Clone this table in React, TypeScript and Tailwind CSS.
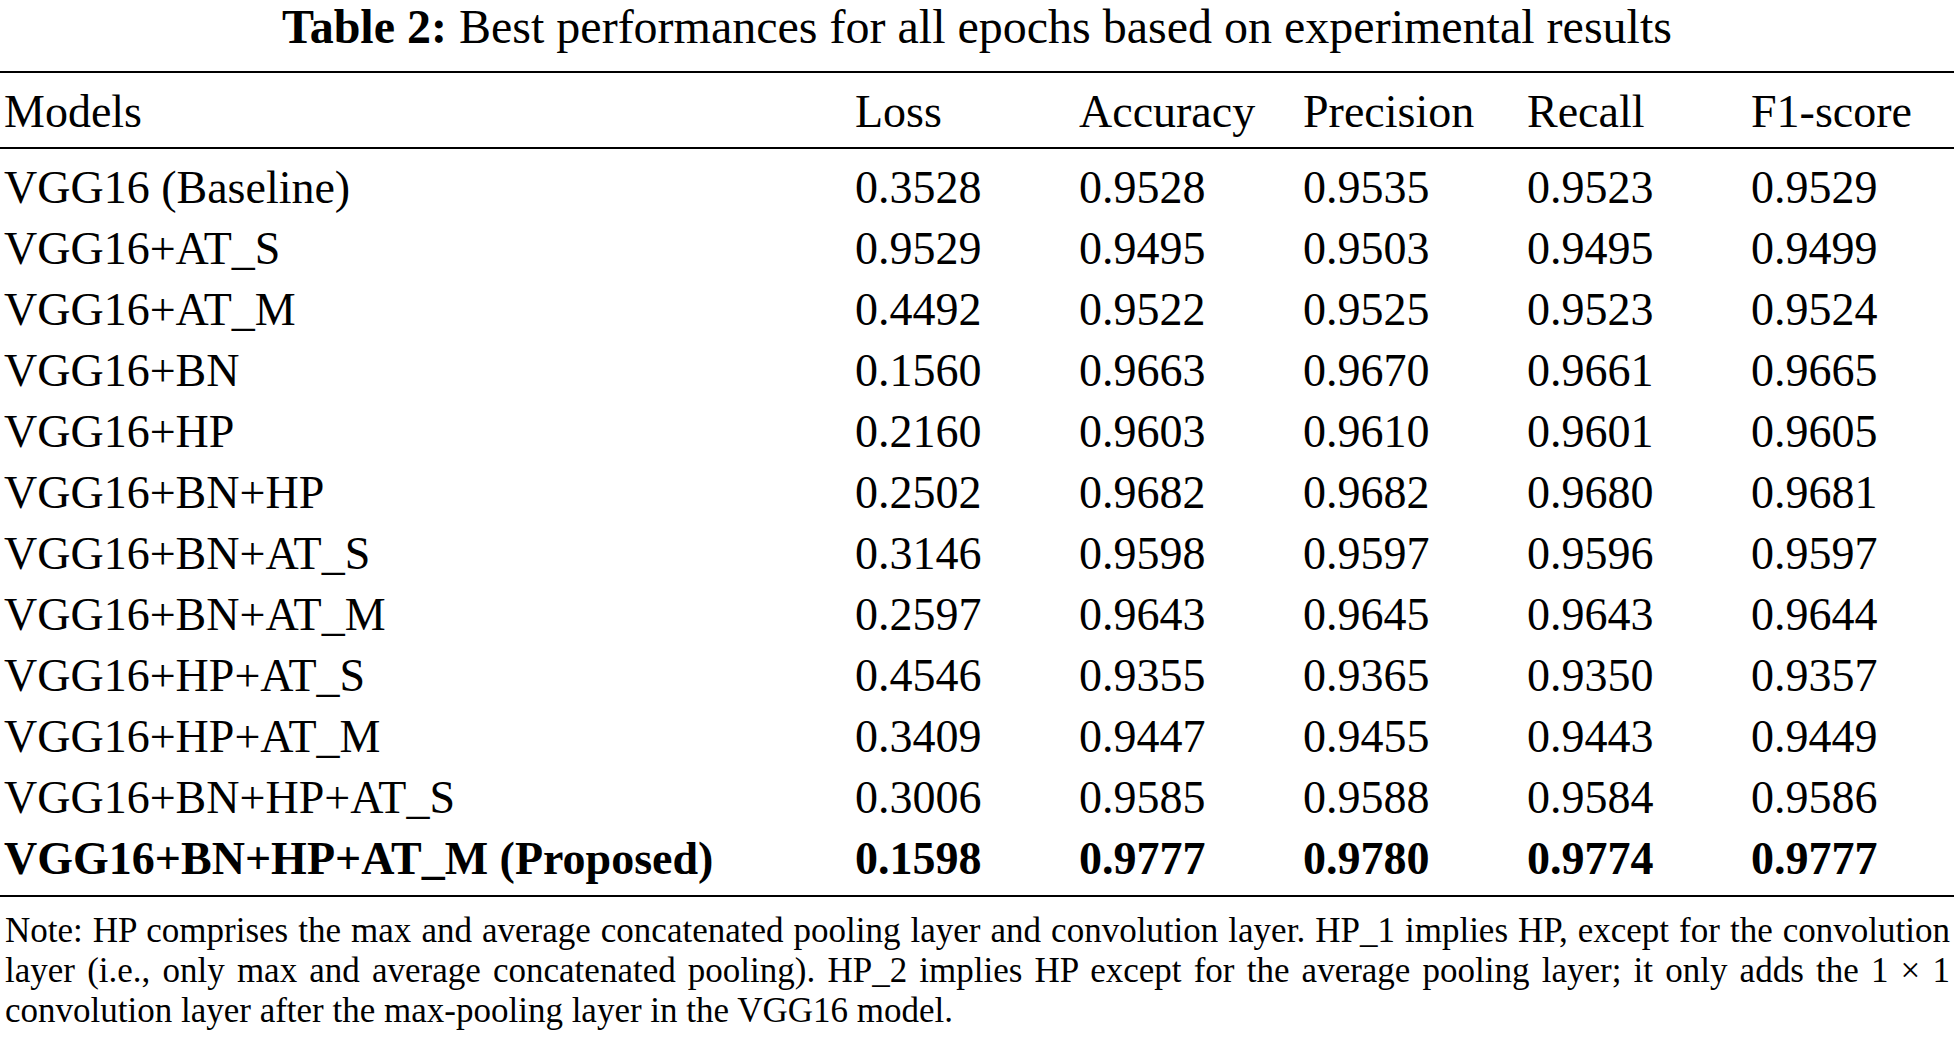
const rows: { model: string; values: string[]; bold?: boolean }[] = [
  { model: "VGG16 (Baseline)", values: ["0.3528", "0.9528", "0.9535", "0.9523", "0.9529"] },
  { model: "VGG16+AT_S", values: ["0.9529", "0.9495", "0.9503", "0.9495", "0.9499"] },
  { model: "VGG16+AT_M", values: ["0.4492", "0.9522", "0.9525", "0.9523", "0.9524"] },
  { model: "VGG16+BN", values: ["0.1560", "0.9663", "0.9670", "0.9661", "0.9665"] },
  { model: "VGG16+HP", values: ["0.2160", "0.9603", "0.9610", "0.9601", "0.9605"] },
  { model: "VGG16+BN+HP", values: ["0.2502", "0.9682", "0.9682", "0.9680", "0.9681"] },
  { model: "VGG16+BN+AT_S", values: ["0.3146", "0.9598", "0.9597", "0.9596", "0.9597"] },
  { model: "VGG16+BN+AT_M", values: ["0.2597", "0.9643", "0.9645", "0.9643", "0.9644"] },
  { model: "VGG16+HP+AT_S", values: ["0.4546", "0.9355", "0.9365", "0.9350", "0.9357"] },
  { model: "VGG16+HP+AT_M", values: ["0.3409", "0.9447", "0.9455", "0.9443", "0.9449"] },
  { model: "VGG16+BN+HP+AT_S", values: ["0.3006", "0.9585", "0.9588", "0.9584", "0.9586"] },
  {
    model: "VGG16+BN+HP+AT_M (Proposed)",
    values: ["0.1598", "0.9777", "0.9780", "0.9774", "0.9777"],
    bold: true,
  },
];

const headers = ["Models", "Loss", "Accuracy", "Precision", "Recall", "F1-score"];

const gridCols = "grid grid-cols-[851px_224px_224px_224px_224px_1fr]";

export default function App() {
  return (
    <div className="w-[1954px] min-h-[1037px] bg-white text-black font-['Liberation_Serif','Times_New_Roman',serif]">
      {/* caption */}
      <div className="h-[71px] text-center text-[48px] leading-[54px]">
        <span className="font-bold">Table 2:</span>{" "}
        Best performances for all epochs based on experimental results
      </div>

      <div className="h-[2px] bg-black" />

      {/* header */}
      <div className={`${gridCols} pl-[4px] pt-[8px] pb-[5px] text-[46px] leading-[61px]`}>
        {headers.map((h) => (
          <div key={h} className="whitespace-nowrap">
            {h}
          </div>
        ))}
      </div>

      <div className="h-[2px] bg-black" />

      {/* body */}
      <div className="pt-[8px] pb-[6px]">
        {rows.map((r) => (
          <div
            key={r.model}
            className={`${gridCols} pl-[4px] text-[46px] leading-[61px] ${r.bold ? "font-bold" : ""}`}
          >
            <div className="whitespace-nowrap">{r.model}</div>
            {r.values.map((v, i) => (
              <div key={i} className="whitespace-nowrap">
                {v}
              </div>
            ))}
          </div>
        ))}
      </div>

      <div className="h-[2px] bg-black" />

      {/* note */}
      <div className="pl-[5px] pr-[4px] pt-[14px] text-[35px] leading-[40px]">
        <div className="text-justify [text-align-last:justify] whitespace-nowrap">
          Note: HP comprises the max and average concatenated pooling layer and convolution layer. HP_1 implies HP,
          except for the convolution
        </div>
        <div className="text-justify [text-align-last:justify] whitespace-nowrap">
          layer (i.e., only max and average concatenated pooling). HP_2 implies HP except for the average pooling
          layer; it only adds the 1 × 1
        </div>
        <div className="whitespace-nowrap">convolution layer after the max-pooling layer in the VGG16 model.</div>
      </div>
    </div>
  );
}
